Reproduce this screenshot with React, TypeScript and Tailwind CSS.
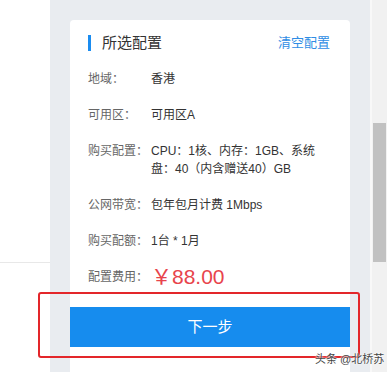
import React from "react";

const rows: { label: string; value: React.ReactNode }[] = [
  { label: "地域：", value: "香港" },
  { label: "可用区：", value: "可用区A" },
  {
    label: "购买配置：",
    value: (
      <>
        CPU：1核、内存：1GB、系统
        <br />
        盘：40（内含赠送40）GB
      </>
    ),
  },
  { label: "公网带宽：", value: "包年包月计费 1Mbps" },
  { label: "购买配额：", value: "1台 * 1月" },
];

export default function App() {
  return (
    <div
      className="relative flex h-[372px] w-[387px] overflow-hidden bg-white text-[12px] text-[#333]"
      style={{ fontFamily: '"Liberation Sans", "Noto Sans CJK SC", sans-serif' }}
    >
      {/* left page area */}
      <div className="flex w-[50px] shrink-0 flex-col">
        <div className="h-[262px]" />
        <div className="h-px bg-[#e8e8e8]" />
      </div>

      {/* gray side panel */}
      <div className="w-[320px] shrink-0 bg-[#e9ecf0] px-[20px] pt-[20px]">
        <div className="flex h-full flex-col rounded-t-[4px] bg-white">
          <div className="pl-[18px] pr-[20px] pt-[14px]">
            <div className="flex h-[18px] items-center justify-between">
              <div className="flex items-center">
                <span className="h-[16px] w-[3px] bg-[#1a8cf0]" />
                <span className="ml-[11px] text-[15px] text-[#333]">所选配置</span>
              </div>
              <span className="text-[13px] text-[#2f8de4]">清空配置</span>
            </div>

            {rows.map((r) => (
              <div key={r.label} className="mt-[18px] flex leading-[18px]">
                <span className="w-[63px] shrink-0 whitespace-nowrap text-[#666]">{r.label}</span>
                <span className="whitespace-nowrap text-[#333]">{r.value}</span>
              </div>
            ))}

            <div className="mt-[18px] flex h-[18px] items-center">
              <span className="w-[63px] shrink-0 whitespace-nowrap text-[#666]">配置费用：</span>
              <span className="whitespace-nowrap text-[21px] leading-[18px] text-[#e8444c]">￥88.00</span>
            </div>
          </div>

          <button className="mt-[21px] h-[40px] w-full bg-[#168cee] text-[15px] text-white">
            下一步
          </button>
        </div>
      </div>

      {/* scrollbar */}
      <div className="w-[2px] shrink-0 bg-[#f8f8f8]" />
      <div className="flex flex-1 flex-col bg-[#f1f1f1] px-[1px]">
        <div className="h-[123px]" />
        <div className="h-[139px] bg-[#c1c1c1]" />
      </div>

      {/* annotation box */}
      <div className="absolute left-[38px] top-[292px] h-[66px] w-[322px] rounded-[3px] border-[2.5px] border-[#e3262a]" />

      {/* watermark */}
      <div
        className="absolute left-[315px] top-[352px] whitespace-nowrap text-[11px] leading-[14px] text-[#444]"
        style={{ textShadow: "0 0 2px #fff, 0 0 2px #fff" }}
      >
        头条 @北桥苏
      </div>
    </div>
  );
}
